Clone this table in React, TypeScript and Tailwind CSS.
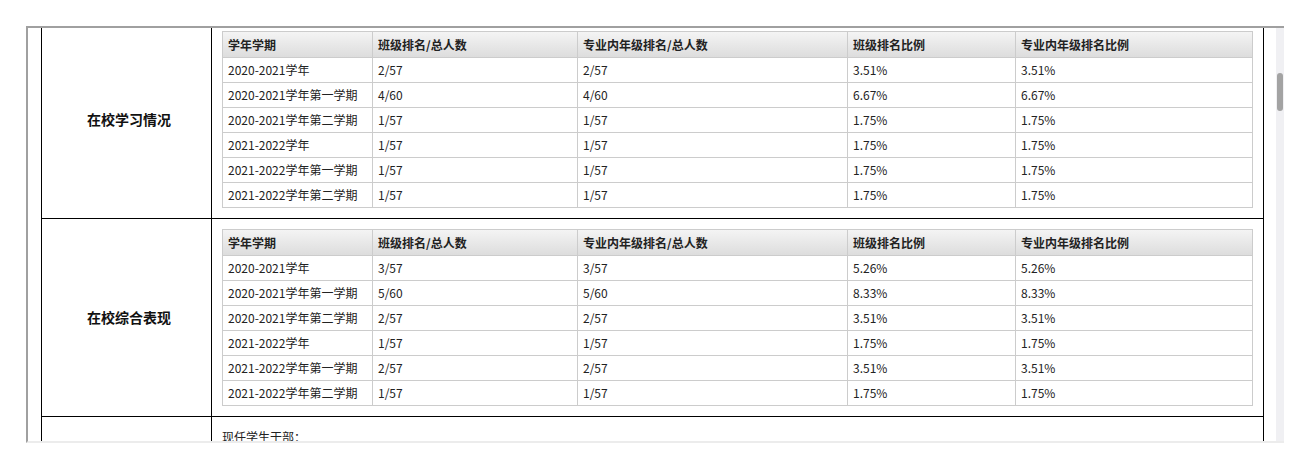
import React from 'react';

const cols = ['w-[150px]', 'w-[205px]', 'w-[270px]', 'w-[168px]', 'w-[237px]'];
const heads = ['学年学期', '班级排名/总人数', '专业内年级排名/总人数', '班级排名比例', '专业内年级排名比例'];

const study = [
  ['2020-2021学年', '2/57', '2/57', '3.51%', '3.51%'],
  ['2020-2021学年第一学期', '4/60', '4/60', '6.67%', '6.67%'],
  ['2020-2021学年第二学期', '1/57', '1/57', '1.75%', '1.75%'],
  ['2021-2022学年', '1/57', '1/57', '1.75%', '1.75%'],
  ['2021-2022学年第一学期', '1/57', '1/57', '1.75%', '1.75%'],
  ['2021-2022学年第二学期', '1/57', '1/57', '1.75%', '1.75%'],
];

const overall = [
  ['2020-2021学年', '3/57', '3/57', '5.26%', '5.26%'],
  ['2020-2021学年第一学期', '5/60', '5/60', '8.33%', '8.33%'],
  ['2020-2021学年第二学期', '2/57', '2/57', '3.51%', '3.51%'],
  ['2021-2022学年', '1/57', '1/57', '1.75%', '1.75%'],
  ['2021-2022学年第一学期', '2/57', '2/57', '3.51%', '3.51%'],
  ['2021-2022学年第二学期', '1/57', '1/57', '1.75%', '1.75%'],
];

function RankTable({ rows }: { rows: string[][] }) {
  return (
    <div className="border-l border-t border-[#cccccc] w-[1031px]">
      <div className="flex bg-linear-to-b from-[#f4f4f4] to-[#dcdcdc]">
        {heads.map((h, i) => (
          <div key={h} className={`${cols[i]} h-[26px] leading-[25px] pl-[5px] border-r border-b border-[#cccccc] font-bold text-[#222]`}>
            {h}
          </div>
        ))}
      </div>
      {rows.map((r, ri) => (
        <div key={ri} className="flex">
          {r.map((c, i) => (
            <div key={i} className={`${cols[i]} h-[25px] leading-[24px] pl-[5px] border-r border-b border-[#cccccc] text-[#222]`}>
              {c}
            </div>
          ))}
        </div>
      ))}
    </div>
  );
}

function Row({ label, children }: { label: string; children: React.ReactNode }) {
  return (
    <div className="flex border-b border-black">
      <div className="w-[170px] border-r border-black flex items-center justify-center pl-[5px] text-[14px] font-bold text-[#111]">
        {label}
      </div>
      <div className="w-[1051px] p-[10px]">{children}</div>
    </div>
  );
}

export default function App() {
  return (
    <div className="bg-white w-[1294px] h-[459px] pl-[26px] pt-[26px] text-[12px] font-['Noto_Sans_CJK_SC',sans-serif]">
      <div className="w-[1258px] h-[417px] border-t-2 border-l-2 border-[#a0a0a0] border-b-2 border-b-[#ececec] flex">
        <div className="w-[1248px] overflow-hidden">
          <div className="-mt-[7px] ml-[13px] w-[1223px] border-l border-r border-black">
            <Row label="在校学习情况">
              <RankTable rows={study} />
            </Row>
            <Row label="在校综合表现">
              <RankTable rows={overall} />
            </Row>
            <div className="flex">
              <div className="w-[170px] h-[60px] border-r border-black" />
              <div className="pt-[10px] pl-[10px] leading-[20px] text-[#222]">现任学生干部：</div>
            </div>
          </div>
        </div>
        <div className="w-[8px] bg-[#f0f0f3] pt-[45px] pl-px">
          <div className="w-[6px] h-[38px] rounded-[3px] bg-[#a3a3a3]" />
        </div>
      </div>
    </div>
  );
}
